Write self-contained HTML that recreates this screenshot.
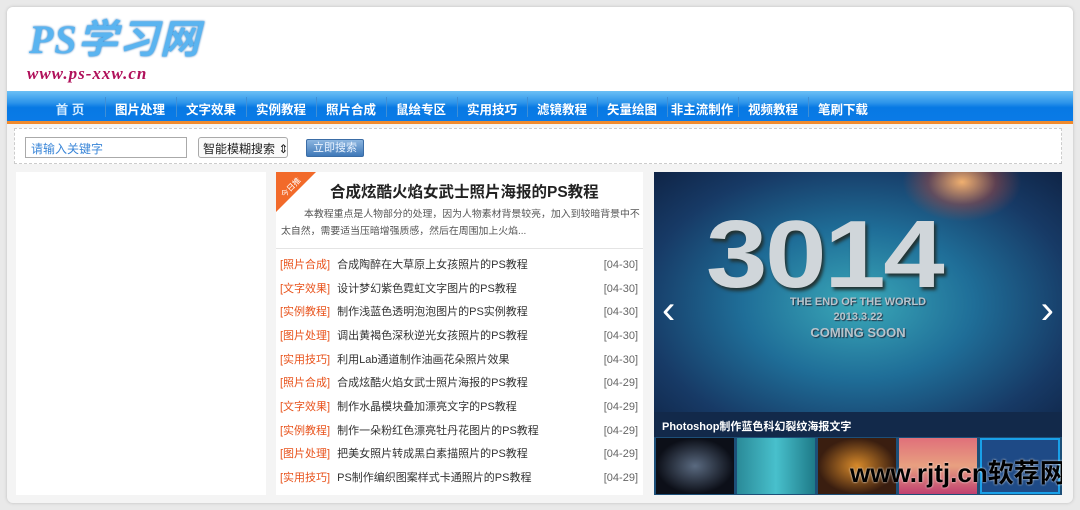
<!DOCTYPE html>
<html><head><meta charset="utf-8"><style>
*{margin:0;padding:0;box-sizing:border-box}
body{width:1080px;height:510px;background:#e9e9e9;font-family:"Liberation Sans","Noto Sans CJK SC",sans-serif;position:relative;overflow:hidden}
.wrap{position:absolute;left:7px;top:7px;width:1066px;height:496px;background:#f4f4f4;border-radius:6px;box-shadow:0 0 3px #bbb}
.head{position:absolute;left:0;top:0;width:1066px;height:84px;background:#fff;border-radius:6px 6px 0 0}
.logo1{position:absolute;left:22px;top:0px;font:italic bold 40px "Liberation Serif","Noto Sans CJK SC",serif;color:#5ab4f0;text-shadow:0 0 2px #1469b8;letter-spacing:1px}
.logo2{position:absolute;left:20px;top:57px;font:italic bold 17px "Liberation Serif",serif;color:#b0105a;letter-spacing:1px}
.nav{position:absolute;left:0;top:84px;width:1066px;height:33px;background:linear-gradient(#6cc0f5 0,#2b93ea 40%,#0779e4 55%,#0a7ae6 100%);border-bottom:3px solid #f08a2c}
.nav span{position:absolute;top:8px;color:#fff;font-size:12.5px;font-weight:bold;transform:translateX(-50%);white-space:nowrap}
.nav i{position:absolute;top:6px;width:1px;height:20px;background:#3f8fd6}
.search{position:absolute;left:7px;top:121px;width:1048px;height:36px;border:1px dashed #ccc;background:#fff}
.inp{position:absolute;left:10px;top:8px;width:162px;height:21px;border:1px solid #aaa;font-size:12px;color:#3a86d8;padding:2px 5px;white-space:nowrap}
.sel{position:absolute;left:183px;top:8px;width:90px;height:21px;border:1px solid #aaa;border-radius:3px;font-size:12px;color:#222;padding:2px 4px;background:#fafafa;white-space:nowrap;overflow:hidden}
.btn{position:absolute;left:291px;top:10px;width:58px;height:18px;background:linear-gradient(#8cb6e0,#3f78b8);border:1px solid #3b6da6;border-radius:2px;color:#e8f2ff;font-size:11px;text-align:center;line-height:16px}
.left{position:absolute;left:9px;top:165px;width:250px;height:323px;background:#fff}
.mid{position:absolute;left:269px;top:165px;width:367px;height:323px;background:#fff}
.tag{position:absolute;left:0;top:0;width:0;height:0;border-top:40px solid #f26a2a;border-right:40px solid transparent}
.tagt{position:absolute;left:3px;top:10px;color:#fff;font-size:8px;transform:rotate(-45deg)}
.title{position:absolute;left:54px;top:8px;font-size:15.5px;font-weight:bold;color:#222}
.desc{position:absolute;left:5px;top:34px;width:362px;font-size:9.9px;color:#555;line-height:17px;text-indent:23px}
.hr{position:absolute;left:0;top:76px;width:367px;height:1px;background:#e4e4e4}
.row{position:absolute;left:4px;width:358px;font-size:11px;color:#333;line-height:14px;white-space:nowrap}
.row b{font-weight:normal;color:#e8531c;margin-right:7px}
.row em{font-style:normal;position:absolute;right:0;top:0;color:#666}
.sl{position:absolute;left:647px;top:165px;width:408px;height:323px;background:#1d4f78;overflow:hidden}
.img{position:absolute;left:0;top:0;width:408px;height:240px;background:radial-gradient(ellipse at 50% 55%,#3aa8b8 0,#1f6e98 40%,#173a66 75%,#0f2446 100%)}
.glow{position:absolute;right:40px;top:-30px;width:120px;height:80px;background:radial-gradient(#f0b070,rgba(200,80,60,.4) 40%,transparent 70%)}
.big{position:absolute;left:52px;top:28px;font:bold 96px "Liberation Sans",sans-serif;color:#d0d6da;letter-spacing:-2px;text-shadow:2px 3px 3px #233;transform:scaleX(1.15);transform-origin:left}
.sub{position:absolute;width:408px;text-align:center;color:#b8c4cc;font-weight:bold;text-shadow:1px 1px 1px #234}
.cap{position:absolute;left:0;top:240px;width:408px;height:25px;background:#12294a;color:#fff;font-size:11px;font-weight:bold;padding:6px 8px}
.th{position:absolute;top:266px;height:56px;width:78px}
.arr{position:absolute;top:116px;color:#fff;font-size:40px;font-weight:200}
</style></head><body>
<div class="wrap">
<div class="head"><div class="logo1">PS学习网</div><div class="logo2">www.ps-xxw.cn</div></div>
<div class="nav">
<span style="left:63px;color:#d4ecff">首 页</span>
<span style="left:133px">图片处理</span><i style="left:98px"></i>
<span style="left:204px">文字效果</span><i style="left:169px"></i>
<span style="left:274px">实例教程</span><i style="left:239px"></i>
<span style="left:344px">照片合成</span><i style="left:309px"></i>
<span style="left:414px">鼠绘专区</span><i style="left:379px"></i>
<span style="left:485px">实用技巧</span><i style="left:450px"></i>
<span style="left:555px">滤镜教程</span><i style="left:520px"></i>
<span style="left:625px">矢量绘图</span><i style="left:590px"></i>
<span style="left:695px">非主流制作</span><i style="left:660px"></i>
<span style="left:766px">视频教程</span><i style="left:731px"></i>
<span style="left:836px">笔刷下载</span><i style="left:801px"></i>
</div>
<div class="search"><div class="inp">请输入关键字</div><div class="sel">智能模糊搜索 ⇕</div><div class="btn">立即搜索</div></div>
<div class="left"></div>
<div class="mid">
<div class="tag"></div><div class="tagt">今日推</div>
<div class="title">合成炫酷火焰女武士照片海报的PS教程</div>
<div class="desc">本教程重点是人物部分的处理，因为人物素材背景较亮，加入到较暗背景中不太自然，需要适当压暗增强质感，然后在周围加上火焰...</div>
<div class="hr"></div>
<div class="row" style="top:86px"><b>[照片合成]</b>合成陶醉在大草原上女孩照片的PS教程<em>[04-30]</em></div>
<div class="row" style="top:110px"><b>[文字效果]</b>设计梦幻紫色霓虹文字图片的PS教程<em>[04-30]</em></div>
<div class="row" style="top:133px"><b>[实例教程]</b>制作浅蓝色透明泡泡图片的PS实例教程<em>[04-30]</em></div>
<div class="row" style="top:157px"><b>[图片处理]</b>调出黄褐色深秋逆光女孩照片的PS教程<em>[04-30]</em></div>
<div class="row" style="top:181px"><b>[实用技巧]</b>利用Lab通道制作油画花朵照片效果<em>[04-30]</em></div>
<div class="row" style="top:204px"><b>[照片合成]</b>合成炫酷火焰女武士照片海报的PS教程<em>[04-29]</em></div>
<div class="row" style="top:228px"><b>[文字效果]</b>制作水晶模块叠加漂亮文字的PS教程<em>[04-29]</em></div>
<div class="row" style="top:252px"><b>[实例教程]</b>制作一朵粉红色漂亮牡丹花图片的PS教程<em>[04-29]</em></div>
<div class="row" style="top:275px"><b>[图片处理]</b>把美女照片转成黑白素描照片的PS教程<em>[04-29]</em></div>
<div class="row" style="top:299px"><b>[实用技巧]</b>PS制作编织图案样式卡通照片的PS教程<em>[04-29]</em></div>
</div>
<div class="sl">
<div class="img"><div class="glow"></div><div class="big">3014</div>
<div class="sub" style="top:124px;font-size:11px">THE END OF THE WORLD</div>
<div class="sub" style="top:139px;font-size:11px">2013.3.22</div>
<div class="sub" style="top:153px;font-size:13px">COMING SOON</div>
<div class="arr" style="left:8px">‹</div><div class="arr" style="right:8px">›</div></div>
<div class="cap">Photoshop制作蓝色科幻裂纹海报文字</div>
<div class="th" style="left:2px;background:radial-gradient(#5a6a80,#0c0f18 70%)"></div>
<div class="th" style="left:83px;background:linear-gradient(90deg,#2a8a98,#48c0cc,#1e7a88)"></div>
<div class="th" style="left:164px;background:radial-gradient(#d88a2a,#3a1e10 70%)"></div>
<div class="th" style="left:245px;background:linear-gradient(#e0707a,#e8a080 50%,#c04070)"></div>
<div class="th" style="left:326px;width:80px;border:2px solid #19a0e8;background:#1e4a86"></div>
<div style="position:absolute;left:196px;top:281px;font:bold 26px 'Liberation Sans','Noto Sans CJK SC',sans-serif;color:#000;text-shadow:0 0 2px #fff;white-space:nowrap">www.rjtj.cn软荐网</div>
</div>
</div>
</body></html>
